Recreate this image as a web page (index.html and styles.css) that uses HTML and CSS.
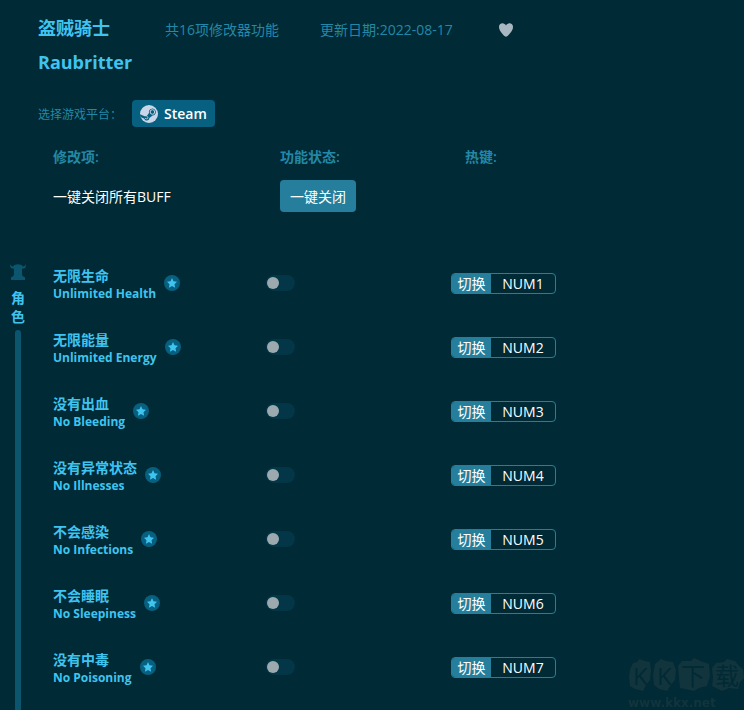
FILE: index.html
```html
<!DOCTYPE html>
<html lang="zh-CN">
<head>
    <meta charset="utf-8">
    <meta name="viewport" content="width=device-width, initial-scale=1">
    <title>盗贼骑士 Raubritter</title>
    <link rel="stylesheet" href="styles.css">
</head>
<body>

    <svg class="sprite" aria-hidden="true">
        <symbol id="star" viewBox="0 0 16 16">
            <circle cx="8" cy="8" r="8" fill="#07607f"/>
            <path d="M8 3l1.500 3.200 3.500.5-2.500 2.500.6 3.500L8 11.100l-3.100 1.600.6-3.500L3 6.700l3.500-.5z" fill="#3fc4f0"/>
        </symbol>
    </svg>

    <div class="page">
        <header class="header">
            <h1 class="title">盗贼骑士<br>Raubritter</h1>
            <div class="meta">
                <span>共16项修改器功能</span>
                <span>更新日期:2022-08-17</span>
                <button type="button" class="heart" aria-label="收藏">
                    <svg width="14" height="14" viewBox="0 0 14 14"><path d="M7 13.8C6 13.8 0 8.6 0 4 0 1.600 1.600.3 3.500.3 5 .3 6.300 1.200 7 2.600 7.700 1.200 9 .3 10.500.3 12.400.3 14 1.600 14 4 14 8.600 8 13.800 7 13.800z" fill="#a9b8c0"/></svg>
                </button>
            </div>
        </header>

        <div class="platform">
            <span>选择游戏平台：</span>
            <button type="button" class="steam-btn">
                <svg width="18" height="18" viewBox="0 0 18 18">
                    <circle cx="9" cy="9" r="9" fill="#c9d6ea"/>
                    <path d="M0 9.300l5.200 2.200c.5-.3 1-.4 1.600-.4L9 8.100a3.500 3.500 0 1 1 3.600 2.500L9.400 13a2.600 2.600 0 0 1-5.100.7L.5 12.100A9 9 0 0 1 0 9.300z" fill="#07607f"/>
                    <circle cx="12.400" cy="7" r="2.300" fill="none" stroke="#c9d6ea" stroke-width="1"/>
                    <path d="M5 13.300l1.200.5a1.300 1.300 0 1 0 1-2.400l-1-.4" fill="none" stroke="#c9d6ea" stroke-width=".8"/>
                </svg>
                Steam
            </button>
        </div>

        <div class="columns labels">
            <span>修改项:</span>
            <span>功能状态:</span>
            <span>热键:</span>
        </div>

        <div class="columns close-all">
            <span>一键关闭所有BUFF</span>
            <button type="button" class="close-btn">一键关闭</button>
        </div>

        <main class="section">
            <div class="rail">
                <svg width="16" height="16" viewBox="0 0 16 16"><path d="M.3 0C-.2 3 .8 4.600 3.300 4.600L4 5v5.500L3.200 12.300 1 13.200V16h14v-2.800l-2.200-.9L12 10.500V5l.7-.4c2.500 0 3.500-1.600 3-4.600C15.200 1.500 14.500 2.300 13 2.600 11.800 1 10.200.2 8 .2S4.200 1 3 2.600C1.500 2.300.8 1.500.3 0z" fill="#0b566e"/></svg>
                <h2 class="rail-title">角色</h2>
                <div class="rail-bar"></div>
            </div>

            <ul class="cheats">
                <li class="cheat">
                    <div class="name">
                        <label for="cheat1">无限生命<br><span class="en">Unlimited Health</span></label>
                        <svg width="16" height="16"><use href="#star"/></svg>
                    </div>
                    <input type="checkbox" class="switch" id="cheat1">
                    <button type="button" class="hotkey"><span class="action">切换</span><span class="key">NUM1</span></button>
                </li>
                <li class="cheat">
                    <div class="name">
                        <label for="cheat2">无限能量<br><span class="en">Unlimited Energy</span></label>
                        <svg width="16" height="16"><use href="#star"/></svg>
                    </div>
                    <input type="checkbox" class="switch" id="cheat2">
                    <button type="button" class="hotkey"><span class="action">切换</span><span class="key">NUM2</span></button>
                </li>
                <li class="cheat">
                    <div class="name">
                        <label for="cheat3">没有出血<br><span class="en">No Bleeding</span></label>
                        <svg width="16" height="16"><use href="#star"/></svg>
                    </div>
                    <input type="checkbox" class="switch" id="cheat3">
                    <button type="button" class="hotkey"><span class="action">切换</span><span class="key">NUM3</span></button>
                </li>
                <li class="cheat">
                    <div class="name">
                        <label for="cheat4">没有异常状态<br><span class="en">No Illnesses</span></label>
                        <svg width="16" height="16"><use href="#star"/></svg>
                    </div>
                    <input type="checkbox" class="switch" id="cheat4">
                    <button type="button" class="hotkey"><span class="action">切换</span><span class="key">NUM4</span></button>
                </li>
                <li class="cheat">
                    <div class="name">
                        <label for="cheat5">不会感染<br><span class="en">No Infections</span></label>
                        <svg width="16" height="16"><use href="#star"/></svg>
                    </div>
                    <input type="checkbox" class="switch" id="cheat5">
                    <button type="button" class="hotkey"><span class="action">切换</span><span class="key">NUM5</span></button>
                </li>
                <li class="cheat">
                    <div class="name">
                        <label for="cheat6">不会睡眠<br><span class="en">No Sleepiness</span></label>
                        <svg width="16" height="16"><use href="#star"/></svg>
                    </div>
                    <input type="checkbox" class="switch" id="cheat6">
                    <button type="button" class="hotkey"><span class="action">切换</span><span class="key">NUM6</span></button>
                </li>
                <li class="cheat">
                    <div class="name">
                        <label for="cheat7">没有中毒<br><span class="en">No Poisoning</span></label>
                        <svg width="16" height="16"><use href="#star"/></svg>
                    </div>
                    <input type="checkbox" class="switch" id="cheat7">
                    <button type="button" class="hotkey"><span class="action">切换</span><span class="key">NUM7</span></button>
                </li>
            </ul>
        </main>

        <div class="watermark">
            <svg width="116" height="34" viewBox="0 0 116 34">
                <g fill="#12343d">
                    <path d="M5 5l4-1 2-3 6 2 5 1 1 9-1 9-4 5-3 6-8-2-5-3-1-9 1-8z"/>
                    <path d="M27 6l6-5 5 2 7 1 3 8-1 10-4 5-4 6-8-2-5-4-1-9 1-7z"/>
                    <path d="M50 8l4-5 9 0 3-3 9 4 6 2 1 12-3 10-8 2-5 3-9-2-5-1-1-10z"/>
                    <path d="M84 10l4-5 8-1 3-3 8 2 4 5 4 3 1 9-4 4-2 7-9-1-7 3-6-3-4-2 1-8z"/>
                </g>
                <g class="watermark-text">
                    <text x="5" y="27">K</text>
                    <text x="29" y="27">K</text>
                    <text x="53" y="27">下</text>
                    <text x="87" y="27">载</text>
                </g>
            </svg>
            <span class="watermark-url">www.kkx.net</span>
        </div>
    </div>

</body>
</html>
```

FILE: styles.css
```css
* {
    box-sizing: border-box;
}

body {
    margin: 0;
    font-family: "Open Sans", "Noto Sans CJK SC", sans-serif;
    font-size: 14px;
    background-color: #002a35;
    color: #2388a8;
}

button {
    font-family: inherit;
    font-size: 14px;
    padding: 0;
    border: none;
    cursor: pointer;
    color: #fff;
}

svg {
    display: block;
    flex-shrink: 0;
}

.sprite {
    position: absolute;
    width: 0;
    height: 0;
}

.page {
    position: relative;
    min-height: 100vh;
    display: flex;
    flex-direction: column;
    overflow: hidden;
}

.header {
    display: flex;
    align-items: flex-start;
    padding: 11px 20px 0 38px;
}

.title {
    margin: 0;
    width: 127px;
    font-size: 18px;
    line-height: 34px;
    color: #3fc4f0;
}

.meta {
    display: flex;
    align-items: center;
    gap: 41px;
    line-height: 38px;
}

.heart {
    padding: 5px;
    background: none;
}

.platform {
    display: flex;
    align-items: center;
    gap: 10px;
    padding: 21px 20px 0 38px;
    font-size: 12px;
}

.steam-btn {
    display: flex;
    align-items: center;
    gap: 6px;
    height: 27px;
    padding: 0 8px;
    border-radius: 4px;
    background-color: #07607f;
    font-weight: 600;
}

.columns {
    display: grid;
    grid-template-columns: 227px 185px 1fr;
    align-items: center;
    padding-left: 53px;
}

.labels {
    margin-top: 20px;
    line-height: 20px;
    font-weight: 600;
}

.close-all {
    margin-top: 13px;
    color: #fff;
}

.close-btn {
    justify-self: start;
    height: 32px;
    padding: 0 10px;
    border-radius: 4px;
    background-color: #257f9c;
}

.section {
    flex: 1;
    display: grid;
    grid-template-columns: 36px 1fr;
    margin-top: 39px;
}

.rail {
    display: flex;
    flex-direction: column;
    align-items: center;
    padding-top: 13px;
}

.rail-title {
    margin: 8px 0 4px;
    width: 14px;
    font-size: 14px;
    line-height: 19px;
    color: #3fc4f0;
}

.rail-bar {
    flex: 1;
    width: 6px;
    border-radius: 3px 3px 0 0;
    background-color: #0b566e;
}

.cheats {
    list-style: none;
    margin: 0;
    padding: 0 0 0 17px;
}

.cheat {
    display: grid;
    grid-template-columns: 213px 185px 1fr;
    align-items: center;
    height: 64px;
}

.name {
    display: flex;
    align-items: center;
    gap: 8px;
    font-weight: bold;
    line-height: 17px;
    color: #3fc4f0;
}

    .name label {
        padding-top: 2px;
    }

.en {
    font-size: 12px;
}

.switch {
    appearance: none;
    width: 29px;
    height: 16px;
    margin: 0;
    padding: 2px 1px;
    border-radius: 8px;
    background-color: #033747;
    cursor: pointer;
}

    .switch::before {
        content: "";
        display: block;
        width: 12px;
        height: 12px;
        border-radius: 50%;
        background-color: #9caab0;
    }

    .switch:checked::before {
        margin-left: auto;
    }

.hotkey {
    display: flex;
    justify-self: start;
    width: 105px;
    height: 21px;
    border: 1px solid #257f9c;
    border-radius: 4px;
    overflow: hidden;
    background: none;
    line-height: 19px;
}

.action {
    width: 39px;
    background-color: #257f9c;
}

.key {
    flex: 1;
}

.watermark {
    position: absolute;
    right: 0;
    bottom: -3px;
    width: 116px;
    pointer-events: none;
    color: #12343d;
}

.watermark-text {
    font-size: 24px;
    fill: #002a35;
}

.watermark-url {
    font-family: "DejaVu Sans", sans-serif;
    font-size: 12px;
    font-weight: bold;
    line-height: 20px;
}
```
